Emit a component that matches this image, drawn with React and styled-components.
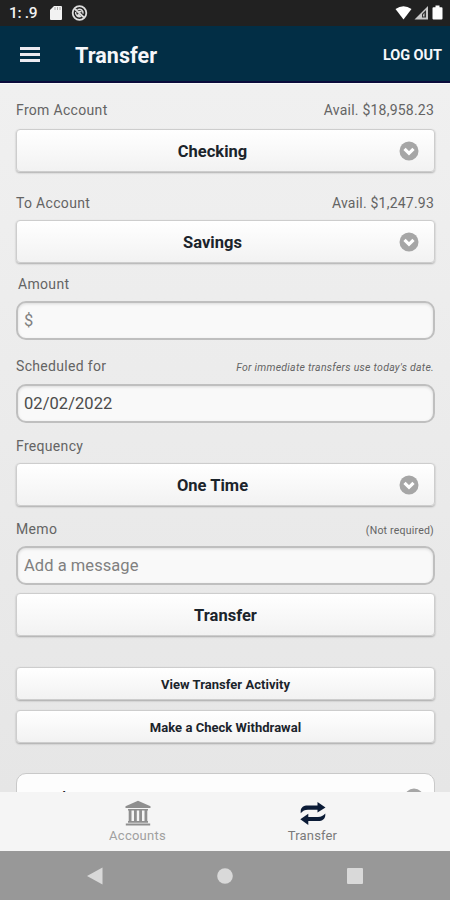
import React from 'react';
import styled, { createGlobalStyle } from 'styled-components';

const GlobalStyle = createGlobalStyle`
  * {
    box-sizing: border-box;
  }

  body {
    margin: 0;
    font-family: Roboto, 'Liberation Sans', sans-serif;
  }
`;

const Screen = styled.div`
  display: flex;
  flex-direction: column;
  width: 450px;
  height: 900px;
  overflow: hidden;
  background: #ececec;
`;

const StatusBar = styled.div`
  display: flex;
  flex: none;
  align-items: center;
  height: 26px;
  padding: 0 6px 0 9px;
  background: #212121;
  color: #f2f2f2;
`;

const Clock = styled.span`
  width: 40px;
  font-size: 15.5px;
  font-weight: 500;
  line-height: 26px;
  letter-spacing: -0.3px;
`;

const StatusIcons = styled.div`
  display: flex;
  gap: ${props => props.gap}px;
  margin-left: ${props => (props.right ? 'auto' : '0')};

  svg {
    display: block;
  }
`;

const Header = styled.header`
  display: flex;
  flex: none;
  align-items: center;
  height: 57px;
  padding: 2px 8px 0 20px;
  border-bottom: 2px solid #0b0c3c;
  background: #022e45;
  color: #f6f7fa;
`;

const MenuButton = styled.button`
  display: flex;
  flex-direction: column;
  gap: 3px;
  width: 20px;
  padding: 0;
  border: 0;
  background: none;

  span {
    height: 3px;
    background: #eceaf0;
  }
`;

const Title = styled.h1`
  margin: 2px 0 0 35px;
  font-size: 21.5px;
  font-weight: 700;
  line-height: 28px;
  letter-spacing: 0.05px;
`;

const LogOut = styled.span`
  margin: 1px 0 0 auto;
  font-size: 14.5px;
  font-weight: 700;
  letter-spacing: -0.05px;
`;

const Content = styled.main`
  flex: 1;
  min-height: 0;
  overflow: hidden;
  padding: 0 15px 0 16px;
  border-top: 1px solid #fafafa;
  background: linear-gradient(#f0f0f0, #e6e6e6);
`;

const LabelRow = styled.div`
  display: flex;
  align-items: center;
  justify-content: space-between;
  height: 20px;
  margin-top: ${props => props.top}px;
  padding: 0 1px 0 ${props => props.indent || 0}px;
  color: #646464;
  font-size: 14px;
  letter-spacing: 0.32px;
`;

const Balance = styled.span`
  letter-spacing: 0.22px;
`;

const Hint = styled.span`
  padding-top: 2px;
  font-size: 10.5px;
  font-style: ${props => (props.italic ? 'italic' : 'normal')};
  letter-spacing: ${props => (props.italic ? '0.26px' : '0.22px')};
`;

const Button = styled.button`
  display: flex;
  align-items: center;
  width: 100%;
  height: ${props => (props.small ? 33 : 43)}px;
  margin: ${props => props.top}px 0 0;
  padding: ${props => (props.select ? '0 15px 0 9px' : '0 15px')};
  border: 1px solid #cdcdcd;
  border-radius: 4px;
  background: linear-gradient(#ffffff, #f2f2f2);
  box-shadow: 0 1px 2px rgba(0, 0, 0, 0.28);
  color: #1b242b;
  font-family: inherit;
  font-size: ${props => (props.small ? 13 : 16.5)}px;
  font-weight: 700;
  letter-spacing: ${props => (props.small ? 0.03 : 0.03)}px;

  span {
    flex: 1;
    padding-top: ${props => (props.small ? 1 : 2)}px;
    text-align: center;
  }
`;

const Input = styled.input`
  display: block;
  width: 100%;
  height: 39px;
  margin: ${props => props.top}px 0 0;
  padding: 0 6px;
  border: 2px solid #bfbfbf;
  border-radius: 10px;
  outline: 0;
  background: #f9f9f9;
  box-shadow: inset 0 1px 3px rgba(0, 0, 0, 0.12);
  color: #4b4b4b;
  font-family: inherit;
  font-size: 16.5px;
  letter-spacing: 0.05px;

  &::placeholder {
    color: #808080;
    opacity: 1;
  }
`;

const Panel = styled.section`
  display: flex;
  justify-content: space-between;
  height: 80px;
  margin-top: 30px;
  padding: 14px 10px 0 23px;
  border: 1px solid #c9c9c9;
  border-radius: 10px;
  background: #fdfdfd;
  color: #1b242b;
  font-size: 13px;
  font-weight: 700;
  line-height: 17px;
`;

const TabBar = styled.nav`
  display: flex;
  flex: none;
  height: 59px;
  padding: 0 50px;
  background: #f5f5f5;
`;

const Tab = styled.a`
  display: flex;
  flex: 1;
  flex-direction: column;
  align-items: center;
  padding-top: 8px;
  color: ${props => (props.active ? '#7a7a7a' : '#a0a0a0')};
  font-size: 13px;
  line-height: 16px;
  letter-spacing: ${props => (props.active ? '0.15px' : '0.25px')};

  svg {
    display: block;
    margin-bottom: 2px;
  }
`;

const SystemBar = styled.div`
  display: flex;
  flex: none;
  align-items: center;
  justify-content: space-between;
  height: 49px;
  padding: 0 87px;
  background: #989898;
`;

const ChevronIcon = () => (
  <svg width="20" height="20" viewBox="0 0 20 20">
    <circle cx="10" cy="10" r="9.5" fill="#a6a6a6" />
    <path d="M5.5 7.8l4.5 4.5 4.5-4.5" fill="none" stroke="#fff" strokeWidth="3.2" />
  </svg>
);

const BankIcon = () => (
  <svg width="26" height="26" viewBox="0 0 26 26">
    <g fill="#8f8f8f">
      <path d="M13 0.7L25.5 6.3V8H0.5V6.3z" />
      <path d="M3 9h20v1.5H3zM3 21h20v1.7H3zM0.8 23.4h24.4v2.2H0.8z" />
      <path d="M3.7 10h2.8v11H3.7zM9 10h2.8v11H9zM14.2 10H17v11h-2.8zM19.5 10h2.8v11h-2.8z" />
    </g>
  </svg>
);

const TransferIcon = () => (
  <svg width="26" height="26" viewBox="0 0 26 26" fill="#0b1b36">
    <path d="M.7 13.2V11C.9 7.3 3.7 5.5 7.5 5.5h10V2l8 5.6-8 5V9.7H8c-3.5 0-5 1-7.3 3.5z" />
    <path d="M25.3 13.5v1.700c-.2 3.600-3 5.900-7 5.900h-10v3.800l-8-5.700 8-5.400v3.100H18c3.500 0 5-1 7.300-3.400z" />
  </svg>
);

const SelectButton = ({ top, children }) => (
  <Button top={top} select>
    <span>{children}</span>
    <ChevronIcon />
  </Button>
);

const App = () => (
  <Screen>
    <GlobalStyle />
    <StatusBar>
      <Clock>1: .9</Clock>
      <StatusIcons gap={8}>
        <svg width="14" height="16" viewBox="0 0 14 16">
          <path d="M5 1h7q1 0 1 1v12q0 1-1 1H2q-1 0-1-1V5z" fill="#f2f2f2" />
          <path d="M6 2v3M8.5 2v3M11 2v3" stroke="#aaa" />
        </svg>
        <svg width="17" height="16" viewBox="0 0 17 16" fill="none" stroke="#dedede">
          <circle cx="8.5" cy="8" r="6.8" strokeWidth="1.8" />
          <path d="M4 4l9 8.5" strokeWidth="1.8" />
          <path d="M6.5 4.7c3-1.5 6 .5 5.5 4M4.7 7c-.7 3.5 2.5 5.5 5.5 4.3M7.5 6.5l3 .2M6.5 9.5l2.5 1" strokeWidth="1.5" />
        </svg>
      </StatusIcons>
      <StatusIcons gap={2} right>
        <svg width="17" height="16" viewBox="0 0 17 16">
          <path d="M.5 4Q8.5-1.5 16.5 4L8.5 14.5z" fill="#fff" />
        </svg>
        <svg width="15" height="16" viewBox="0 0 15 16">
          <path d="M14 1v13.5H.5z" fill="#c8c8c8" />
          <path d="M12 5v7.5H8V9z" fill="#333" />
          <path d="M10.5 8v3.5H9V9.5z" fill="#c8c8c8" />
        </svg>
        <svg width="13" height="16" viewBox="0 0 13 16">
          <path d="M4.5.5h4v1.7h2q1 0 1 1v10.3q0 1-1 1h-8q-1 0-1-1V3.2q0-1 1-1h2z" fill="#fff" />
        </svg>
      </StatusIcons>
    </StatusBar>
    <Header>
      <MenuButton>
        <span />
        <span />
        <span />
      </MenuButton>
      <Title>Transfer</Title>
      <LogOut>LOG OUT</LogOut>
    </Header>
    <Content>
      <LabelRow top={16}>
        <span>From Account</span>
        <Balance>Avail. $18,958.23</Balance>
      </LabelRow>
      <SelectButton top={9}>Checking</SelectButton>
      <LabelRow top={21}>
        <span>To Account</span>
        <Balance>Avail. $1,247.93</Balance>
      </LabelRow>
      <SelectButton top={7}>Savings</SelectButton>
      <LabelRow top={11} indent={2}>
        <span>Amount</span>
      </LabelRow>
      <Input top={7} placeholder="$" />
      <LabelRow top={16}>
        <span>Scheduled for</span>
        <Hint italic>For immediate transfers use today's date.</Hint>
      </LabelRow>
      <Input top={8} defaultValue="02/02/2022" />
      <LabelRow top={13}>
        <span>Frequency</span>
      </LabelRow>
      <SelectButton top={7}>One Time</SelectButton>
      <LabelRow top={13}>
        <span>Memo</span>
        <Hint>(Not required)</Hint>
      </LabelRow>
      <Input top={7} placeholder="Add a message" />
      <Button top={8}>
        <span>Transfer</span>
      </Button>
      <Button small top={31}>
        <span>View Transfer Activity</span>
      </Button>
      <Button small top={10}>
        <span>Make a Check Withdrawal</span>
      </Button>
      <Panel>
        <span>Bank Account</span>
        <ChevronIcon />
      </Panel>
    </Content>
    <TabBar>
      <Tab>
        <BankIcon />
        Accounts
      </Tab>
      <Tab active>
        <TransferIcon />
        Transfer
      </Tab>
    </TabBar>
    <SystemBar>
      <svg width="16" height="18" viewBox="0 0 16 18">
        <path d="M15.5.5v17L0 9z" fill="#d9d9d9" />
      </svg>
      <svg width="16" height="16" viewBox="0 0 16 16">
        <circle cx="8" cy="8" r="7.8" fill="#d9d9d9" />
      </svg>
      <svg width="16" height="16" viewBox="0 0 16 16">
        <rect width="16" height="16" rx="1" fill="#d9d9d9" />
      </svg>
    </SystemBar>
  </Screen>
);

export default App;
